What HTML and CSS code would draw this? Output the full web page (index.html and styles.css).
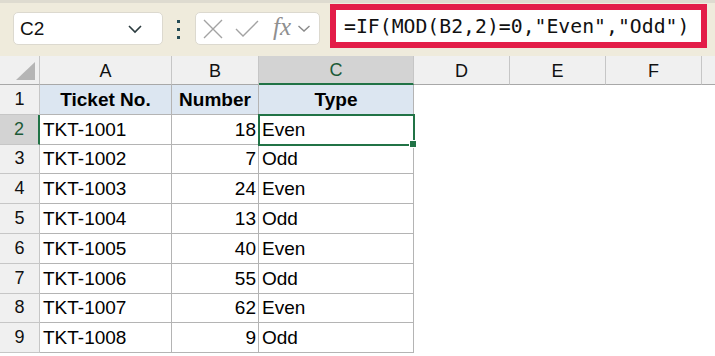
FILE: index.html
```html
<!DOCTYPE html>
<html lang="en">
<head>
    <meta charset="UTF-8">
    <meta name="viewport" content="width=device-width, initial-scale=1.0">
    <title>Even or Odd</title>
    <link rel="stylesheet" href="styles.css">
</head>
<body>
    <!-- Formula bar -->
    <div class="toolbar">
        <div class="name-box">
            <span>C2</span>
            <svg class="chev" width="16" height="10" viewBox="0 0 16 10"><path d="M2 2 L8 8 L14 2" fill="none" stroke="#2b3b3f" stroke-width="1.6"/></svg>
        </div>
        <div class="dots"><i></i><i></i><i></i></div>
        <div class="fx-box">
            <svg width="22" height="22" viewBox="0 0 22 22"><path d="M2 2 L20 20 M20 2 L2 20" stroke="#a3a3a3" stroke-width="1.4"/></svg>
            <svg width="26" height="20" viewBox="0 0 26 20"><path d="M2 10 L9 17 L24 2" fill="none" stroke="#a3a3a3" stroke-width="1.4"/></svg>
            <span class="fx">fx</span>
            <svg width="14" height="9" viewBox="0 0 14 9"><path d="M1.5 2 L7 7 L12.5 2" fill="none" stroke="#8a8a8a" stroke-width="1.4"/></svg>
        </div>
        <div class="formula">
            <span>=IF(MOD(B2,2)=0,"Even","Odd")</span>
        </div>
    </div>

    <!-- Sheet -->
    <div class="sheet">
        <div class="corner"></div>
        <div class="col-head">A</div>
        <div class="col-head">B</div>
        <div class="col-head active">C</div>
        <div class="col-head">D</div>
        <div class="col-head">E</div>
        <div class="col-head">F</div>
        <div class="col-head last"></div>

        <div class="row-head">1</div>
        <div class="cell head">Ticket No.</div>
        <div class="cell head">Number</div>
        <div class="cell head">Type</div>
        <div class="blank"></div><div class="blank"></div><div class="blank"></div><div class="blank"></div>

        <div class="row-head active">2</div>
        <div class="cell">TKT-1001</div>
        <div class="cell num">18</div>
        <div class="cell selected">Even<span class="handle"></span></div>
        <div class="blank"></div><div class="blank"></div><div class="blank"></div><div class="blank"></div>

        <div class="row-head">3</div>
        <div class="cell">TKT-1002</div>
        <div class="cell num">7</div>
        <div class="cell">Odd</div>
        <div class="blank"></div><div class="blank"></div><div class="blank"></div><div class="blank"></div>

        <div class="row-head">4</div>
        <div class="cell">TKT-1003</div>
        <div class="cell num">24</div>
        <div class="cell">Even</div>
        <div class="blank"></div><div class="blank"></div><div class="blank"></div><div class="blank"></div>

        <div class="row-head">5</div>
        <div class="cell">TKT-1004</div>
        <div class="cell num">13</div>
        <div class="cell">Odd</div>
        <div class="blank"></div><div class="blank"></div><div class="blank"></div><div class="blank"></div>

        <div class="row-head">6</div>
        <div class="cell">TKT-1005</div>
        <div class="cell num">40</div>
        <div class="cell">Even</div>
        <div class="blank"></div><div class="blank"></div><div class="blank"></div><div class="blank"></div>

        <div class="row-head">7</div>
        <div class="cell">TKT-1006</div>
        <div class="cell num">55</div>
        <div class="cell">Odd</div>
        <div class="blank"></div><div class="blank"></div><div class="blank"></div><div class="blank"></div>

        <div class="row-head">8</div>
        <div class="cell">TKT-1007</div>
        <div class="cell num">62</div>
        <div class="cell">Even</div>
        <div class="blank"></div><div class="blank"></div><div class="blank"></div><div class="blank"></div>

        <div class="row-head">9</div>
        <div class="cell">TKT-1008</div>
        <div class="cell num">9</div>
        <div class="cell">Odd</div>
        <div class="blank"></div><div class="blank"></div><div class="blank"></div><div class="blank"></div>
    </div>
</body>
</html>
```

FILE: styles.css
```css
body {
    margin: 0;
    padding: 0;
    font-family: "Liberation Sans", Arial, sans-serif;
    background-color: #fff;
    width: 715px;
    height: 356px;
    overflow: hidden;
}
.toolbar {
    height: 53px;
    border-top: 3px solid #dedbd0;
    background-color: #efebdc;
    display: flex;
    align-items: flex-start;
}
.name-box {
    margin: 9px 0 0 13px;
    width: 150px;
    height: 33px;
    box-sizing: border-box;
    background-color: #fff;
    border: 1px solid #dcd9cf;
    border-radius: 5px;
    display: flex;
    align-items: center;
    justify-content: space-between;
    padding: 0 19px 0 6px;
    font-size: 19px;
    color: #111;
}
.chev {
    margin-top: 1px;
}
.dots {
    margin: 17px 0 0 14px;
    display: flex;
    flex-direction: column;
    gap: 5px;
}
.dots i {
    display: block;
    width: 3px;
    height: 3px;
    background-color: #244b55;
}
.fx-box {
    margin: 9px 0 0 15px;
    width: 125px;
    height: 33px;
    box-sizing: border-box;
    background-color: #fff;
    border: 1px solid #dcd9cf;
    border-radius: 5px;
    display: flex;
    align-items: center;
    padding: 0 0 0 6px;
    gap: 10px;
}
.fx {
    font-family: "Liberation Serif", serif;
    font-style: italic;
    font-size: 25px;
    color: #8f8f8f;
    margin: -4px -4px 0 3px;
}
.formula {
    margin: 1px 0 0 10px;
    width: 377px;
    height: 44px;
    box-sizing: border-box;
    border: 6px solid #e31d48;
    background-color: #fff;
    display: flex;
    align-items: center;
    padding-left: 8px;
    font-family: "DejaVu Sans Mono", monospace;
    font-size: 19.8px;
    color: #111;
}
.sheet {
    display: grid;
    grid-template-columns: 40px 132px 87px 155px 96px 96px 96px 1fr;
    grid-template-rows: 29px repeat(9, 29.8px);
}
.corner {
    background-color: #f0f0f0;
    border-right: 1px solid #c6c6c6;
    border-bottom: 1px solid #a8a8a8;
    position: relative;
}
.corner::after {
    content: "";
    position: absolute;
    right: 4px;
    bottom: 4px;
    width: 0;
    height: 0;
    border-left: 19px solid transparent;
    border-bottom: 18px solid #b5b5b5;
}
.col-head {
    background-color: #f0f0f0;
    border-right: 1px solid #c6c6c6;
    border-bottom: 1px solid #a8a8a8;
    display: flex;
    align-items: center;
    justify-content: center;
    font-size: 18px;
    color: #111;
    padding-top: 2px;
    box-sizing: border-box;
}
.col-head.active {
    background-color: #d3d3d3;
    border-bottom: 2px solid #217346;
    color: #1c5a37;
}
.col-head.last {
    border-right: none;
}
.row-head {
    background-color: #f0f0f0;
    border-right: 1px solid #c6c6c6;
    border-bottom: 1px solid #c6c6c6;
    display: flex;
    align-items: center;
    justify-content: center;
    font-size: 18px;
    color: #111;
    box-sizing: border-box;
}
.row-head.active {
    background-color: #d3d3d3;
    border-right: 2px solid #217346;
    color: #1c5a37;
}
.cell {
    border-right: 1px solid #b4b4b4;
    border-bottom: 1px solid #b4b4b4;
    display: flex;
    align-items: center;
    padding: 1px 3px 0 3px;
    font-size: 19px;
    color: #000;
    box-sizing: border-box;
    position: relative;
}
.cell.head {
    background-color: #dce6f1;
    font-weight: bold;
    justify-content: center;
}
.cell.num {
    justify-content: flex-end;
    padding-right: 2px;
}
.cell.selected {
    outline: 2px solid #217346;
    outline-offset: -1px;
    z-index: 1;
}
.handle {
    position: absolute;
    right: -4px;
    bottom: -4px;
    width: 6px;
    height: 6px;
    background-color: #217346;
    border: 1px solid #fff;
}
.blank {
    background-color: #fff;
}
```
